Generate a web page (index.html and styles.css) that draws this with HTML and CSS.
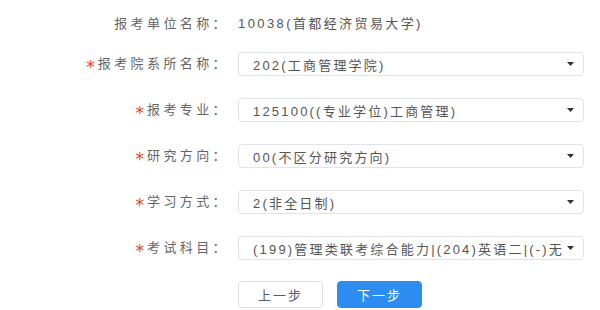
FILE: index.html
```html
<!DOCTYPE html>
<html lang="zh-CN">
<head>
    <meta charset="UTF-8">
    <title>报考信息</title>
    <link rel="stylesheet" href="styles.css">
</head>
<body>
    <div class="apply-form">
        <div class="form-row first">
            <div class="label">报考单位名称：</div>
            <div class="value">10038(首都经济贸易大学)</div>
        </div>
        <div class="form-row">
            <div class="label"><span class="req">*</span>报考院系所名称：</div>
            <div class="select">
                <span>202(工商管理学院)</span>
                <svg class="arrow" width="7" height="4" viewBox="0 0 7 4"><path d="M0 0h7L3.5 4z" fill="#333"/></svg>
            </div>
        </div>
        <div class="form-row">
            <div class="label"><span class="req">*</span>报考专业：</div>
            <div class="select">
                <span>125100((专业学位)工商管理)</span>
                <svg class="arrow" width="7" height="4" viewBox="0 0 7 4"><path d="M0 0h7L3.5 4z" fill="#333"/></svg>
            </div>
        </div>
        <div class="form-row">
            <div class="label"><span class="req">*</span>研究方向：</div>
            <div class="select">
                <span>00(不区分研究方向)</span>
                <svg class="arrow" width="7" height="4" viewBox="0 0 7 4"><path d="M0 0h7L3.5 4z" fill="#333"/></svg>
            </div>
        </div>
        <div class="form-row">
            <div class="label"><span class="req">*</span>学习方式：</div>
            <div class="select">
                <span>2(非全日制)</span>
                <svg class="arrow" width="7" height="4" viewBox="0 0 7 4"><path d="M0 0h7L3.5 4z" fill="#333"/></svg>
            </div>
        </div>
        <div class="form-row">
            <div class="label"><span class="req">*</span>考试科目：</div>
            <div class="select">
                <span>(199)管理类联考综合能力|(204)英语二|(-)无</span>
                <svg class="arrow" width="7" height="4" viewBox="0 0 7 4"><path d="M0 0h7L3.5 4z" fill="#333"/></svg>
            </div>
        </div>
        <div class="form-row buttons">
            <div class="label"></div>
            <div class="btn-group">
                <button class="btn">上一步</button>
                <button class="btn primary">下一步</button>
            </div>
        </div>
    </div>
</body>
</html>
```

FILE: styles.css
```css
body {
    margin: 0;
    padding: 0;
    background: #fff;
    font-family: "Liberation Sans", "Noto Sans CJK SC", sans-serif;
    font-size: 13px;
    letter-spacing: 2.4px;
    overflow: hidden;
}

.apply-form {
    width: 600px;
    height: 310px;
    padding-top: 10px;
    box-sizing: border-box;
}

.form-row {
    display: flex;
    align-items: center;
    height: 24px;
    margin-bottom: 22px;
}

.form-row.first {
    margin-bottom: 18px;
}

.label {
    width: 229px;
    flex-shrink: 0;
    text-align: right;
    color: #666;
    margin-right: 9px;
    letter-spacing: 3.4px;
    white-space: nowrap;
}

.req {
    color: #ed4014;
    font-family: "DejaVu Sans", sans-serif;
    font-size: 17px;
    line-height: 1;
    vertical-align: -5px;
    margin-right: 3px;
    letter-spacing: 0;
}

.value {
    color: #555;
}

.select {
    width: 346px;
    height: 24px;
    box-sizing: border-box;
    border: 1px solid #e0e3e8;
    border-radius: 4px;
    display: flex;
    align-items: center;
    justify-content: space-between;
    padding: 0 9px 0 14px;
    color: #555;
    white-space: nowrap;
    letter-spacing: 2.2px;
}

.arrow {
    flex-shrink: 0;
}

.form-row.buttons {
    height: 27px;
    margin: -1px 0 0;
}

.btn-group {
    display: flex;
    gap: 14px;
}

.btn {
    width: 85px;
    height: 27px;
    border: 1px solid #dcdee2;
    border-radius: 4px;
    background: #fff;
    color: #515a6e;
    font-family: "Liberation Sans", "Noto Sans CJK SC", sans-serif;
    font-size: 13px;
    letter-spacing: 2px;
    cursor: pointer;
}

.btn.primary {
    background: #2d8cf0;
    border-color: #2d8cf0;
    color: #fff;
}
```
